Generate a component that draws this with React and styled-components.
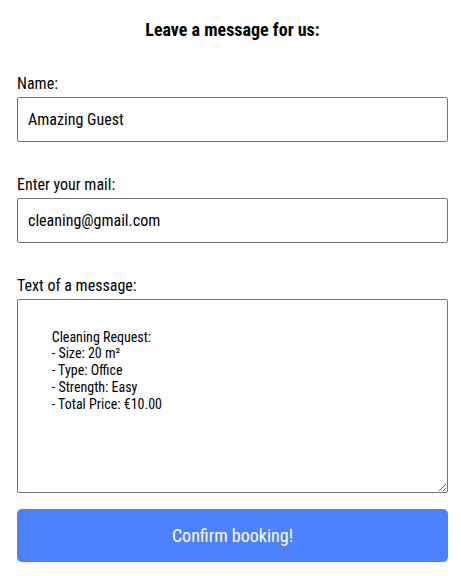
import React from 'react'
import styled, { createGlobalStyle } from 'styled-components'

const GlobalStyle = createGlobalStyle`
  * { box-sizing: border-box; }
  body {
    margin: 0;
    background: #fff;
    font-family: 'Roboto Condensed', 'Roboto', sans-serif;
    color: #000;
  }
`

const message = `
        Cleaning Request:
        - Size: 20 m²
        - Type: Office
        - Strength: Easy
        - Total Price: €10.00
      `

const App = () => {
    return (
        <>
            <GlobalStyle />
            <Form onSubmit={e => e.preventDefault()}>
                <Title>Leave a message for us:</Title>
                <Field>
                    <Label htmlFor="name">Name:</Label>
                    <Input id="name" type="text" defaultValue="Amazing Guest" />
                </Field>
                <Field>
                    <Label htmlFor="mail">Enter your mail:</Label>
                    <Input id="mail" type="email" defaultValue="cleaning@gmail.com" />
                </Field>
                <Field>
                    <Label htmlFor="msg">Text of a message:</Label>
                    <TextArea id="msg" defaultValue={message} />
                </Field>
                <Button type="submit">Confirm booking!</Button>
            </Form>
        </>
    )
}

const Form = styled.form`
    display: flex;
    flex-direction: column;
    padding: 18px 13px 0 17px;
    width: 461px;
`

const Title = styled.h2`
    margin: 0 0 32px;
    text-align: center;
    font-size: 18px;
    font-weight: 700;
    line-height: 24px;
`

const Field = styled.div`
    display: flex;
    flex-direction: column;
    gap: 3px;
    margin-bottom: 33px;
    &:last-of-type {
        margin-bottom: 16px;
    }
`

const Label = styled.label`
    font-size: 16px;
    line-height: 20px;
`

const Input = styled.input`
    height: 45px;
    padding: 0 10px;
    border: 1px solid #767676;
    border-radius: 2px;
    font-family: inherit;
    font-size: 16px;
    color: #000;
    outline: none;
`

const TextArea = styled.textarea`
    height: 194px;
    padding: 12px 10px 10px 8px;
    border: 1px solid #767676;
    border-radius: 2px;
    font-family: inherit;
    font-size: 14px;
    line-height: 16.7px;
    color: #000;
    resize: vertical;
    outline: none;
`

const Button = styled.button`
    height: 53px;
    border: none;
    border-radius: 5px;
    background: #4d80ff;
    color: #fff;
    font-family: inherit;
    font-size: 18px;
    cursor: pointer;
`

export default App
